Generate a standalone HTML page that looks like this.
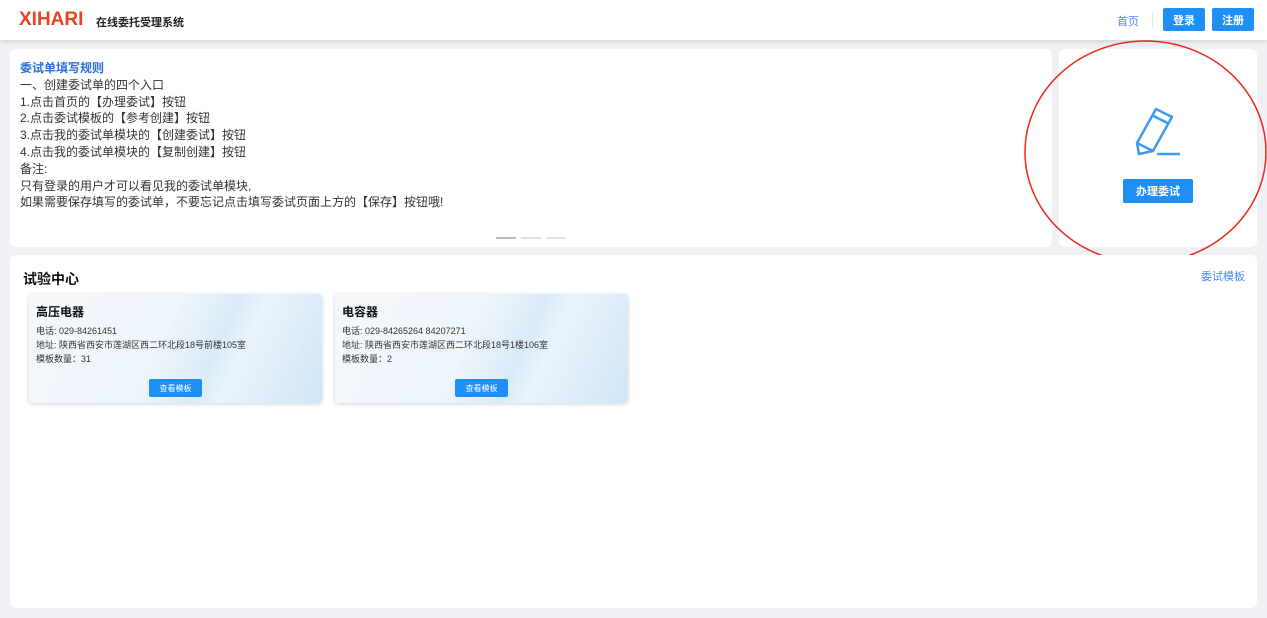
<!DOCTYPE html>
<html><head><meta charset="utf-8"><style>
*{margin:0;padding:0;box-sizing:border-box}
body{width:1267px;height:618px;background:#f0f1f4;font-family:"Liberation Sans","Noto Sans CJK SC",sans-serif;position:relative;overflow:hidden;color:#333}
.hdr{position:absolute;left:0;top:0;width:1267px;height:40px;background:#fff;box-shadow:0 2px 4px rgba(0,0,0,.12)}
.abs{position:absolute}
.panel{position:absolute;background:#fff;border-radius:6px}
.btn{position:absolute;background:#1e8ff6;color:#fff;border-radius:2px;font-weight:bold;display:flex;align-items:center;justify-content:center}
.rules{position:absolute;left:20px;top:60px;font-size:12px;line-height:16.8px;color:#333}
.card{position:absolute;width:293px;height:109px;border-radius:4px;box-shadow:0 1px 4px rgba(0,0,0,.18);background:linear-gradient(115deg,#f4f8fc 0%,#eef5fb 45%,#d9ebf8 62%,#e9f3fb 70%,#cfe5f6 100%);overflow:hidden}
.card .t{position:absolute;left:7px;top:9px;font-size:12px;font-weight:bold;color:#111}
.card .l{position:absolute;left:7px;font-size:9px;color:#333}
.card .b{position:absolute;left:120px;top:85px;width:53px;height:18px;background:#1e8ff6;color:#fff;font-size:8px;display:flex;align-items:center;justify-content:center;border-radius:2px}
</style></head><body>
<div class="hdr">
<div class="abs" style="left:19px;top:9px;font-size:19px;font-weight:900;color:#e8441e;letter-spacing:0">XIHARI</div>
<div class="abs" style="left:96px;top:14px;font-size:11px;font-weight:bold;color:#222">在线委托受理系统</div>
<div class="abs" style="left:1117px;top:13px;font-size:11px;color:#4a8ae8">首页</div>
<div class="abs" style="left:1152px;top:13px;width:1px;height:14px;background:#e5e5e5"></div>
<div class="btn" style="left:1163px;top:8px;width:42px;height:23px;font-size:11px">登录</div>
<div class="btn" style="left:1212px;top:8px;width:42px;height:23px;font-size:11px">注册</div>
</div>
<div class="panel" style="left:10px;top:49px;width:1042px;height:198px"></div>
<div class="rules">
<div style="color:#2d6fd6;font-weight:bold">委试单填写规则</div>
<div>一、创建委试单的四个入口</div>
<div>1.点击首页的【办理委试】按钮</div>
<div>2.点击委试模板的【参考创建】按钮</div>
<div>3.点击我的委试单模块的【创建委试】按钮</div>
<div>4.点击我的委试单模块的【复制创建】按钮</div>
<div>备注:</div>
<div>只有登录的用户才可以看见我的委试单模块,</div>
<div>如果需要保存填写的委试单，不要忘记点击填写委试页面上方的【保存】按钮哦!</div>
</div>
<div class="abs" style="left:496px;top:237px;width:20px;height:2px;background:#bbb"></div>
<div class="abs" style="left:521px;top:237px;width:20px;height:2px;background:#e2e2e2"></div>
<div class="abs" style="left:546px;top:237px;width:20px;height:2px;background:#e2e2e2"></div>
<div class="panel" style="left:1059px;top:49px;width:198px;height:198px"></div>
<svg class="abs" style="left:1130px;top:100px" width="60" height="60" viewBox="0 0 60 60">
<g fill="none" stroke="#3d9af0" stroke-width="2.5" stroke-linejoin="round">
<path d="M26 9 L42 17 L23 51 L9 54 L7 43 Z"/>
<path d="M22.5 15.5 L38.5 23.5"/>
<path d="M7 43 L23 51"/>
</g>
<path d="M27 54 H50" stroke="#3d9af0" stroke-width="2.5"/>
</svg>
<div class="btn" style="left:1123px;top:179px;width:70px;height:24px;font-size:11px">办理委试</div>
<svg class="abs" style="left:1020px;top:38px" width="260" height="230"><ellipse cx="125.5" cy="114" rx="120.5" ry="111" fill="none" stroke="#e8291c" stroke-width="1.5"/></svg>
<div class="panel" style="left:10px;top:255px;width:1247px;height:353px"></div>
<div class="abs" style="left:23px;top:269px;font-size:14px;font-weight:bold;color:#111">试验中心</div>
<div class="abs" style="left:1201px;top:268px;font-size:11px;color:#4a8ae8">委试模板</div>
<div class="card" style="left:29px;top:294px">
<div class="t">高压电器</div>
<div class="l" style="top:30px">电话: 029-84261451</div>
<div class="l" style="top:44px">地址: 陕西省西安市莲湖区西二环北段18号前楼105室</div>
<div class="l" style="top:58px">模板数量：31</div>
<div class="b">查看模板</div>
</div>
<div class="card" style="left:335px;top:294px">
<div class="t">电容器</div>
<div class="l" style="top:30px">电话: 029-84265264 84207271</div>
<div class="l" style="top:44px">地址: 陕西省西安市莲湖区西二环北段18号1楼106室</div>
<div class="l" style="top:58px">模板数量：2</div>
<div class="b">查看模板</div>
</div>
</body></html>
